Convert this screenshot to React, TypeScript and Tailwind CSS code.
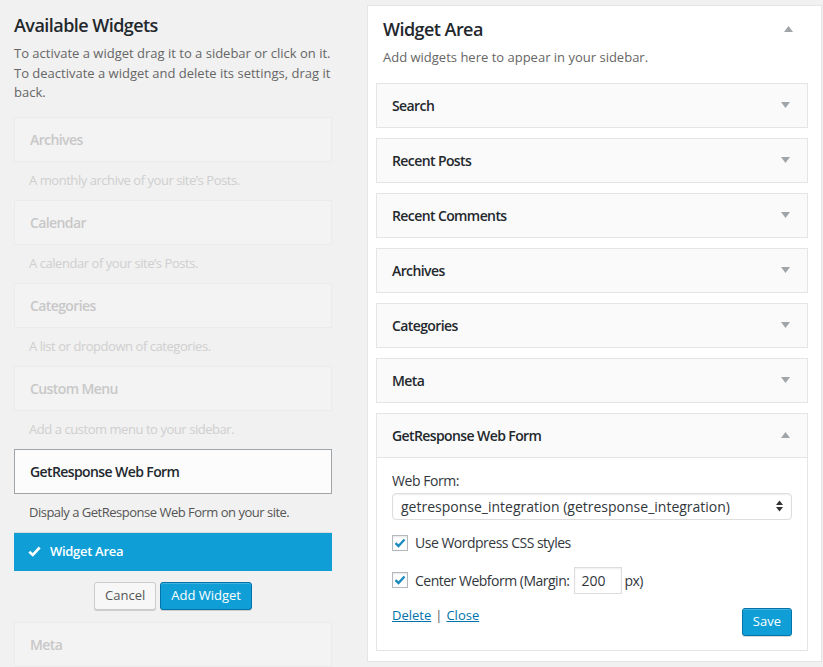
import React from 'react';

const available = [
  { title: 'Archives', desc: 'A monthly archive of your site\u2019s Posts.' },
  { title: 'Calendar', desc: 'A calendar of your site\u2019s Posts.' },
  { title: 'Categories', desc: 'A list or dropdown of categories.' },
  { title: 'Custom Menu', desc: 'Add a custom menu to your sidebar.' },
];

const areaWidgets = ['Search', 'Recent Posts', 'Recent Comments', 'Archives', 'Categories', 'Meta'];

const ArrowDown = () => (
  <svg width="9" height="6" viewBox="0 0 9 6" className="block">
    <path d="M0 0 H9 L4.5 6 Z" fill="#a0a5aa" />
  </svg>
);

const ArrowUp = () => (
  <svg width="9" height="6" viewBox="0 0 9 6" className="block">
    <path d="M0 6 H9 L4.5 0 Z" fill="#a0a5aa" />
  </svg>
);

const Checkbox = () => (
  <span className="flex h-[16px] w-[16px] shrink-0 items-center justify-center border border-[#b4b9be] bg-white shadow-[inset_0_1px_2px_rgba(0,0,0,0.1)]">
    <svg width="12" height="10" viewBox="0 0 12 10">
      <path d="M1.5 5.2 L4.5 8 L10.5 1.5" fill="none" stroke="#1e8cbe" strokeWidth="2.4" />
    </svg>
  </span>
);

export default function App() {
  return (
    <div className="flex min-h-[667px] bg-[#f1f1f1] pl-[14px] font-['Open_Sans',sans-serif] text-[13px] text-[#444]">
      {/* Available widgets column */}
      <div className="w-[318px] pt-[14px]">
        <h2 className="text-[18px] leading-[22px] font-semibold tracking-[-0.55px] text-[#23282d]">Available Widgets</h2>
        <p className="mt-[8px] leading-[19.5px] text-[#666]">
          To activate a widget drag it to a sidebar or click on it. To deactivate a widget and delete its settings, drag it
          back.
        </p>

        <div className="mt-[14px]">
          {available.map((w) => (
            <div key={w.title}>
              <div className="flex h-[45px] items-center border border-[#ebebeb] bg-[#f3f3f3] px-[15px] text-[14px] font-semibold tracking-[-0.6px] text-[#c8c8c8]">
                {w.title}
              </div>
              <div className="flex h-[38px] items-center px-[15px] tracking-[-0.45px] text-[#cfcfcf]">{w.desc}</div>
            </div>
          ))}

          <div className="flex h-[45px] items-center border border-[#a0a5aa] bg-[#fcfcfc] px-[15px] text-[14px] font-semibold tracking-[-0.6px] text-[#23282d]">
            GetResponse Web Form
          </div>
          <div className="flex h-[38px] items-center px-[15px] tracking-[-0.5px] text-[#555]">
            Dispaly a GetResponse Web Form on your site.
          </div>

          <div className="flex h-[39px] items-center border-t border-[#dcdcdc] bg-[#0f9fd6] pl-[14px] text-[13px] font-semibold tracking-[-0.3px] text-white">
            <svg width="13" height="11" viewBox="0 0 13 11" className="mr-[9px]">
              <path d="M1.3 5.8 L4.8 9 L11.7 1.5" fill="none" stroke="#fff" strokeWidth="2.6" />
            </svg>
            Widget Area
          </div>

          <div className="mt-[11px] flex justify-center gap-[4px]">
            <button className="h-[28px] rounded-[3px] border border-[#cccccc] bg-[#f7f7f7] px-[10px] text-[13px] text-[#555] shadow-[0_1px_0_#ccc]">
              Cancel
            </button>
            <button className="h-[28px] rounded-[3px] border border-[#0073aa] bg-[#0f9fd6] px-[10px] text-[13px] text-white shadow-[inset_0_1px_0_rgba(120,200,230,0.5),0_1px_0_rgba(0,0,0,0.15)]">
              Add Widget
            </button>
          </div>

          <div className="mt-[12px] flex h-[45px] items-center border border-[#ebebeb] bg-[#f3f3f3] px-[15px] text-[14px] font-semibold tracking-[-0.6px] text-[#c8c8c8]">
            Meta
          </div>
        </div>
      </div>

      {/* Sidebar panel */}
      <div className="mt-[5px] mb-[5px] ml-[35px] w-[455px] self-start border border-[#e5e5e5] bg-white pt-[12px] pr-[13px] pb-[10px] pl-[8px]">
        <div className="flex items-start justify-between pl-[7px] pr-[15px]">
          <div>
            <h2 className="text-[18px] leading-[22px] font-semibold tracking-[-0.55px] text-[#23282d]">Widget Area</h2>
            <p className="mt-[8px] leading-[19.5px] text-[#666]">Add widgets here to appear in your sidebar.</p>
          </div>
          <div className="mt-[8px]">
            <ArrowUp />
          </div>
        </div>

        <div className="mt-[15px] flex flex-col gap-[10px]">
          {areaWidgets.map((name) => (
            <div
              key={name}
              className="flex h-[45px] items-center justify-between border border-[#e5e5e5] bg-[#fafafa] pl-[15px] pr-[17px] text-[14px] font-semibold tracking-[-0.6px] text-[#23282d]"
            >
              {name}
              <ArrowDown />
            </div>
          ))}

          <div className="border border-[#e5e5e5] bg-white">
            <div className="flex h-[44px] items-center justify-between border-b border-[#e5e5e5] bg-[#fafafa] pl-[15px] pr-[17px] text-[14px] font-semibold tracking-[-0.6px] text-[#23282d]">
              GetResponse Web Form
              <ArrowUp />
            </div>
            <div className="px-[15px] pt-[13px] pb-[14px] text-[#32373c]">
              <div className="text-[14px] leading-[20px] tracking-[-0.45px]">Web Form:</div>
              <div className="mt-[2px] flex h-[27px] items-center justify-between rounded-[4px] border border-[#ddd] bg-white pl-[8px] pr-[8px] text-[14px] text-[#32373c] shadow-[inset_0_1px_2px_rgba(0,0,0,0.07)]">
                getresponse_integration (getresponse_integration)
                <svg width="7" height="12" viewBox="0 0 7 12">
                  <path d="M0 5 H7 L3.5 0.5 Z M0 7 H7 L3.5 11.5 Z" fill="#333" />
                </svg>
              </div>

              <label className="mt-[15px] flex items-center gap-[7px] text-[14px] leading-[16px] tracking-[-0.5px]">
                <Checkbox />
                Use Wordpress CSS styles
              </label>

              <label className="mt-[16px] flex items-center text-[14px] tracking-[-0.5px]">
                <Checkbox />
                <span className="ml-[7px]">Center Webform (Margin:</span>
                <span className="ml-[5px] flex h-[27px] w-[48px] items-center border border-[#ddd] bg-white pl-[6px] tracking-normal shadow-[inset_0_1px_2px_rgba(0,0,0,0.07)]">
                  200
                </span>
                <span className="ml-[2px]">px)</span>
              </label>

              <div className="mt-[14px] flex items-center justify-between">
                <div className="-mt-[12px] text-[13px]">
                  <a className="text-[#0073aa] underline">Delete</a>
                  <span className="mx-[4px] text-[#555]">|</span>
                  <a className="text-[#0073aa] underline">Close</a>
                </div>
                <button className="h-[28px] rounded-[3px] border border-[#0073aa] bg-[#0f9fd6] px-[10px] text-[13px] text-white shadow-[inset_0_1px_0_rgba(120,200,230,0.5),0_1px_0_rgba(0,0,0,0.15)]">
                  Save
                </button>
              </div>
            </div>
          </div>
        </div>
      </div>
    </div>
  );
}
